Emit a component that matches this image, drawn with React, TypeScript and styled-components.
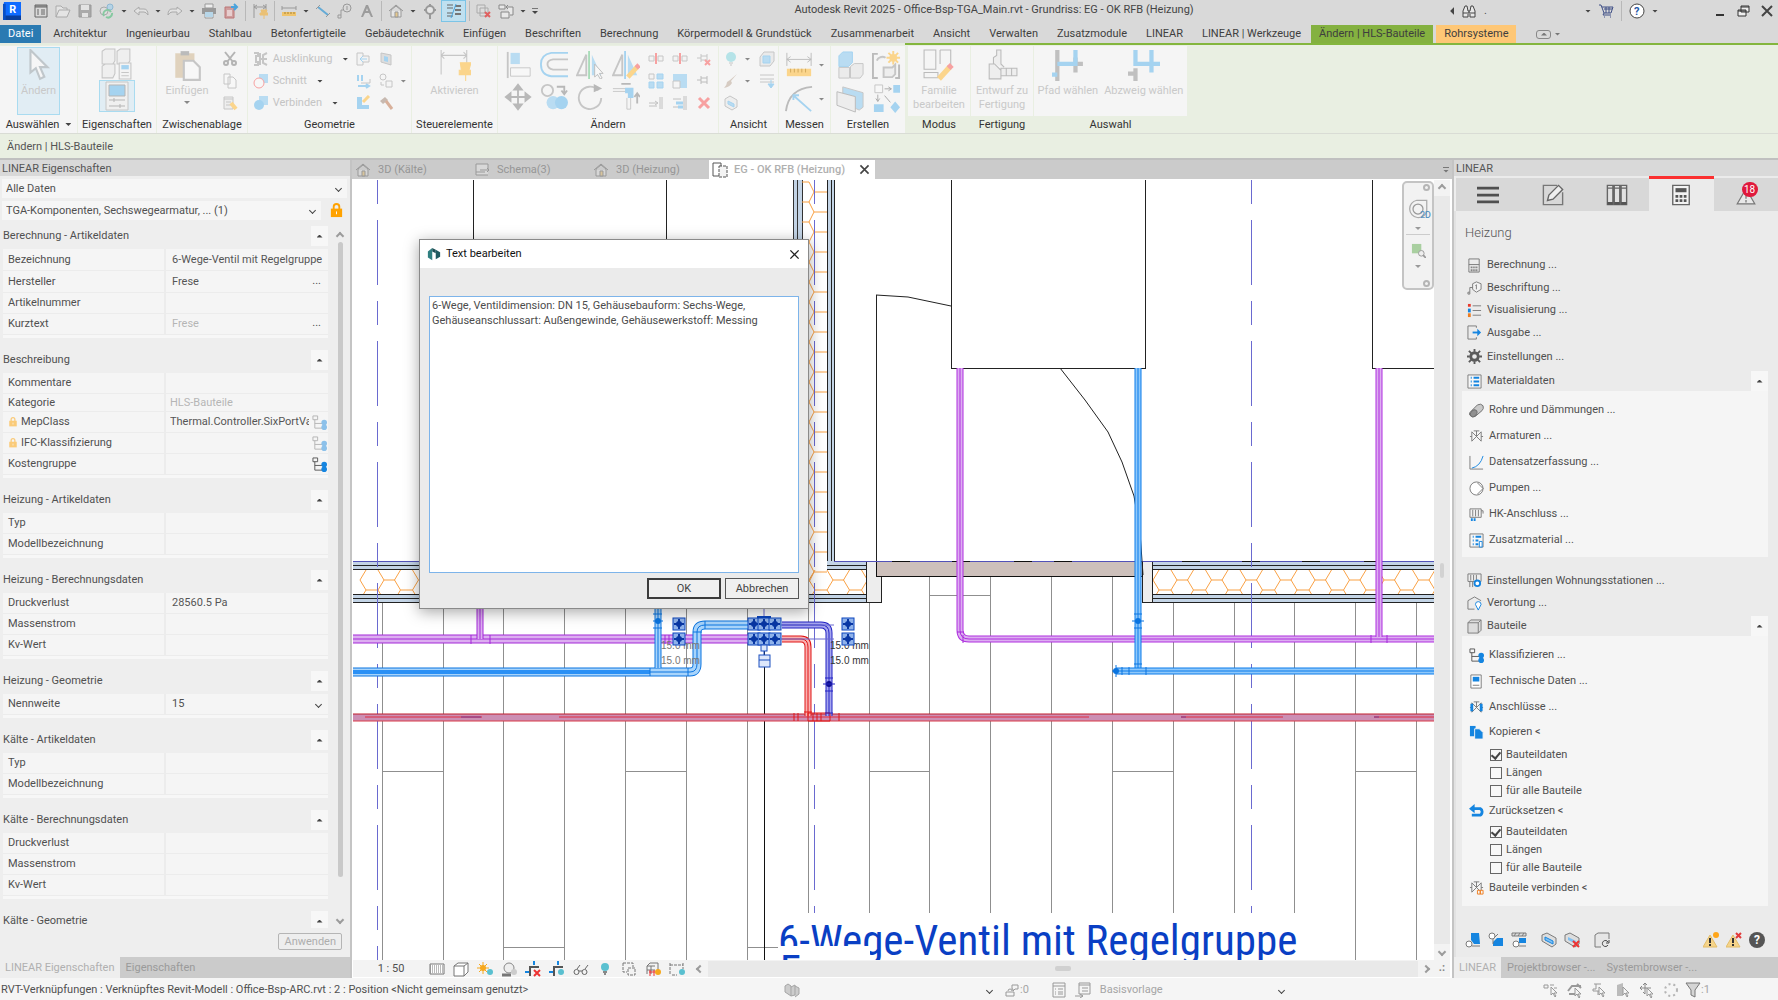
import React from "react";
import styled, { createGlobalStyle } from "styled-components";

const FONT = `Roboto, "Open Sans", "Liberation Sans", sans-serif`;

const Global = createGlobalStyle`
  * { box-sizing: border-box; }
  html, body { margin: 0; height: 100%; }
  body { font: 11px/16px ${FONT}; color: #505050; background: #f5f5f5; }
  button, input, select, textarea { font: inherit; color: inherit; }
  button { border: 0; padding: 0; background: none; }
`;

/* ---------- icons ---------- */

const K = "#7b7b7b";
const BL = "#1585e0";
const G = "#c6c6c6";
const B = "#b9dcf2";
const BB = "#a5d3f0";
const Y = "#fbd58c";
const R = "#f7a1a1";

const valve = (c: string) => (
  <path d="M1 8H3M13 8H15M3 3V13L13 3V13L3 3M8 8V2M5 2H11" fill="none" stroke={c} />
);
const cursor = (x: number, y: number, c = "#999") => (
  <path d={`M${x} ${y}v8l2-2 2 4 1-1-2-3h3z`} fill="#f5f5f5" stroke={c} />
);
const warn = (
  <>
    <path d="M7 3L14 15H0Z" fill="#f5d48a" stroke="#e3bd69" />
    <path d="M7 6V11M7 12V14" stroke="#333" strokeWidth="2" />
  </>
);
const tree = (c: string, b: string) => (
  <>
    <path d="M1 1H6V5H1ZM3 5V14H12M3 9H12" fill="none" stroke={c} />
    <circle cx="13" cy="8" r="3" fill={b} />
    <circle cx="13" cy="13" r="3" fill={b} />
  </>
);
const list = (
  <path d="M1 1H15V15H1Z" fill="#f7f7f7" stroke={K} />
);

const ICONS: Record<string, React.ReactNode> = {
  logo: (
    <>
      <path d="M1 0H20V20H1Z" fill="#0f6bff" />
      <path d="M1 15H20V20H1Z" fill="#0a3f9c" />
      <path d="M0 2H3V20H0Z" fill="#0a4fc4" />
      <text x="7" y="12" fill="#fff" fontSize="12" fontWeight="700" fontFamily="Roboto">R</text>
    </>
  ),
  props: <path d="M2 2H14V14H2ZM2 4H14M2 3H14M4 7H6M8 7H12M4 9H6M8 9H12M4 11H6M8 11H12" fill="none" stroke="#666" />,
  open: <path d="M1 14V3H6L8 5H12V7M1 14L4 7H15L12 14Z" fill="#e4e4e4" stroke="#aaa" />,
  save: <><path d="M2 2H14V14H2Z" fill="#aaa" stroke="#999" /><path d="M4 2H12V7H4ZM5 10H11V14H5Z" fill="#e3e3e3" /></>,
  sync: <><circle cx="5" cy="8" r="4" fill="#ddd" stroke="#aaa" /><circle cx="11" cy="4" r="3" fill="#b5d3e6" stroke="#8fb8d2" /><path d="M5 13A4 4 0 0 1 12 9M13 10A4 4 0 0 1 7 14" fill="none" stroke="#85c9a0" strokeWidth="2" /></>,
  undo: <path d="M1 8L6 4V6H11Q15 6 15 12Q13 9 11 9H6V12Z" fill="#e2e2e2" stroke="#aaa" />,
  redo: <path d="M15 8L10 4V6H5Q1 6 1 12Q3 9 5 9H10V12Z" fill="#e2e2e2" stroke="#aaa" />,
  print: <><path d="M4 1H12V5H4ZM4 10H12V15H4Z" fill="#eee" stroke="#999" /><path d="M1 5H15V11H1Z" fill="#999" /><path d="M4 9H12V14H4Z" fill="#b7d6e8" /></>,
  pdf: <><path d="M2 4H11V15H2Z" fill="#cf9d9d" stroke="#b77" /><path d="M4 8H9M4 10H9M4 12H9" stroke="#fff" /><path d="M8 4H14M11 1L14 4L11 7" stroke="#4aa3dc" strokeWidth="2" fill="none" /></>,
  dimpin: <><path d="M2 1V15M14 1V7M2 4H14M5 2L2 4L5 6M11 2L14 4L11 6" fill="none" stroke="#999" /><path d="M9 7H15L14 10H16V12H8V10H10ZM12 12V16" fill="#eac074" stroke="#eac074" /></>,
  ruler: <><path d="M1 3V7M15 3V7M1 5H15" stroke="#999" /><path d="M1 9H15V13H1Z" fill="#f0c46c" /><path d="M4 9V11M7 9V11M10 9V11M13 9V11" stroke="#a98334" /></>,
  dim2: <><path d="M3 4L13 12" stroke="#65abd6" strokeWidth="2" /><path d="M1 6L5 2M11 14L15 10" stroke="#999" /></>,
  tag: <><circle cx="10" cy="5" r="4" fill="none" stroke="#999" /><path d="M10 3V7M6 7H4V12M1 12H4V15H1Z" fill="none" stroke="#999" /></>,
  letter: <path d="M2 14L7 2H9L14 14H12L10 10H6L4 14ZM7 8H9L8 5Z" fill="#9c9c9c" />,
  house: <><path d="M1 8L8 2L15 8M3 7V14H13V7L8 3Z" fill="#e6e6e6" stroke="#999" /><path d="M7 9H10V14H7Z" fill="#e6c88c" stroke="#999" /></>,
  section: <><circle cx="8" cy="7" r="4" fill="#e6e6e6" stroke="#999" strokeWidth="2" /><path d="M8 1V3M8 11V16M2 7H4M12 7H14" stroke="#999" strokeWidth="2" /></>,
  thin: <><path d="M1 2H7M1 5H7M1 10H7M1 13H7" stroke="#666" /><path d="M9 3H15M9 7H15M9 11H15" stroke="#777" strokeWidth="2" /><path d="M10 1L5 15" stroke="#4aa3dc" /></>,
  closeHidden: <><path d="M1 2H9V10H1ZM4 5H12V13H4Z" fill="#ddd" stroke="#aaa" /><path d="M9 9L14 14M14 9L9 14" stroke="#e06060" strokeWidth="2" /></>,
  switchWin: <path d="M1 2H7V6H1ZM3 9H11V15H3ZM9 4H15V12H12M10 2L8 4L10 6" fill="#e8e8e8" stroke="#888" />,
  binoc: <path d="M2 8L4 3H6L7 8H9L10 3H12L14 8V14H9V9H7V14H2ZM2 10H6M10 10H14" fill="#e8e8e8" stroke="#444" />,
  cart: <path d="M1 2H3L6 10H13L15 4H4M6 10L5 12H13M6 14H7M12 14H13M6 6H14M8 4V10M11 4V10" fill="none" stroke="#3f4f86" strokeWidth="1" />,
  help: <><circle cx="8" cy="8" r="7" fill="#fff" stroke="#444" /><text x="5" y="12" fontSize="11" fontWeight="700" fill="#2458a8" fontFamily="Roboto">?</text></>,
  min: <path d="M3 12H11" stroke="#333" strokeWidth="2" />,
  restore: <path d="M5 3H13V9H5ZM5 4H13M2 7H10V13H2ZM2 8H10" fill="#eee" stroke="#333" />,
  x: <path d="M3 3L13 13M13 3L3 13" stroke="#444" strokeWidth="2" />,
  thinX: <path d="M2 2L14 14M14 2L2 14" stroke="#222" strokeWidth="2" />,
  lock: <><path d="M5 7V4Q5 1 8 1Q11 1 11 4V7" fill="none" stroke="#ffa200" strokeWidth="2" /><path d="M2 6H14V15H2Z" fill="#ffa200" /><path d="M8 9V12" stroke="#fff" /></>,
  tree: tree("#555", BL),
  treeSoft: tree("#b3b3b3", "#8cc1ea"),
  burger: <path d="M0 3H16M0 8H16M0 13H16" stroke="#4f4f4f" strokeWidth="2" />,
  edit: <><path d="M11 1H1V15H15V6" fill="none" stroke="#777" /><path d="M4 12L5 8L12 1L15 4L8 11Z" fill="#eee" stroke="#666" /></>,
  books: <><path d="M1 1H5V15H1ZM6 1H10V15H6ZM11 1H15V15H11ZM1 3H15" fill="#e2e2e2" stroke="#666" /><path d="M1 13H5V15H1ZM6 13H10V15H6ZM11 13H15V15H11Z" fill="#555" /></>,
  calc: <><path d="M2 1H14V15H2Z" fill="#f3f3f3" stroke="#666" /><path d="M4 3H12V6H4Z" fill="#555" /><path d="M4 9H12M4 12H12" stroke="#555" strokeWidth="2" strokeDasharray="2 1" /></>,
  alert: <path d="M8 3L15 15H1ZM8 7V11M8 12V14" fill="#e9e9e9" stroke="#777" />,
  calcS: <><path d="M2 1H13V15H2ZM2 7H13" fill="#ececec" stroke="#777" /><path d="M4 10H12M4 13H12" stroke="#555" strokeWidth="2" strokeDasharray="1 1" /></>,
  tagHex: <><path d="M6 4L10 2L15 4V10L10 13L6 10Z" fill="#f3f3f3" stroke={K} /><path d="M9 6L10 5V10M6 8H3V13M1 13H3V15H1Z" fill="none" stroke={K} /></>,
  legend: <><path d="M1 1H4V4H1Z" fill="#e8392c" /><path d="M1 6H4V10H1Z" fill={BL} /><path d="M1 11H4V15H1Z" fill="#ee7d20" /><path d="M6 3H15M6 8H15M6 13H15" stroke={K} /></>,
  out: <><path d="M10 3V1H1V15H10V13" fill="none" stroke={K} /><path d="M6 8H12" stroke={BL} strokeWidth="2" /><path d="M11 4L15 8L11 12Z" fill={BL} /></>,
  gear: <><circle cx="8" cy="8" r="4" fill="none" stroke="#5b5b5b" strokeWidth="3" /><path d="M8 0V3M8 13V16M0 8H3M13 8H16M2 2L5 5M11 11L14 14M14 2L11 5M5 11L2 14" stroke="#5b5b5b" strokeWidth="2" /></>,
  listBlue: <>{list}<path d="M4 4H5M4 8H5M4 12H5M7 4H13M7 8H13M7 12H13" stroke={BL} strokeWidth="2" /></>,
  pipe: <><path d="M1 10L9 2Q13 0 15 3Q16 6 14 8L7 14Q3 16 1 13Q0 12 1 10Z" fill="#c9c9c9" stroke="#6f6f6f" /><ellipse cx="5" cy="11" rx="3" ry="4" transform="rotate(40 5 11)" fill="#909090" stroke="#6f6f6f" /></>,
  valve: valve(K),
  chart: <><path d="M1 1V15H15" fill="none" stroke={K} /><path d="M3 14Q12 12 15 1" fill="none" stroke={BL} /></>,
  pump: <><circle cx="8" cy="8" r="7" fill="#fff" stroke={K} /><path d="M9 2L15 8L9 14" fill="none" stroke={K} /></>,
  radiator: <><path d="M1 2H13V11H1ZM4 3V10M7 3V10M10 3V10M13 4H15V7" fill="#f3f3f3" stroke={K} /><path d="M3 12V15M6 12V15" stroke={BL} strokeWidth="2" /></>,
  listClip: <>{list}<path d="M4 4H5M4 8H5M4 12H5M7 4H13M7 8H10M7 12H10" stroke={BL} strokeWidth="2" /><path d="M11 9H14V15H11Z" fill="#fff" stroke={BL} /></>,
  station: <><path d="M1 1H15V9H1ZM4 2V8M7 2V8M10 2V8M3 9V15M6 9V15" fill="#eee" stroke={K} /><circle cx="11" cy="11" r="3" fill="#fff" stroke={BL} strokeWidth="2" /></>,
  place: <><path d="M1 5L8 1L15 5M1 5V14H8" fill="none" stroke={K} /><path d="M12 15L9 9Q9 6 12 6Q15 6 15 9Z" fill="#fff" stroke={BL} /></>,
  block: <path d="M1 4L4 1H15V12L12 15H1ZM1 4H12V15M12 4L15 1" fill="#ddd" stroke={K} />,
  tech: <><path d="M2 1H13V15H2Z" fill="#fff" stroke={K} /><path d="M4 3H11V8H4Z" fill={BL} /><path d="M4 12H11" stroke={K} /></>,
  valveBlue: <>{valve(K)}<path d="M3 4V12M13 4V12" stroke={BL} strokeWidth="3" /></>,
  copyBlue: <><path d="M1 1H7V12H1Z" fill={BL} /><path d="M6 4H11L15 8V15H6Z" fill={BL} stroke="#f5f5f5" /></>,
  undoBlue: <><path d="M5 6H12Q14 7 14 9Q14 12 12 13H3" fill="none" stroke={BL} strokeWidth="3" /><path d="M6 1V11L0 6Z" fill={BL} /></>,
  connect: <>{valve(K)}<path d="M9 11H12V15H9ZM12 11H15V15H12Z" fill="#f5f5f5" stroke="#ee7d20" /></>,
  b1: <><path d="M6 1H14L15 12H9L6 8Z" fill={BL} /><circle cx="4" cy="12" r="3" fill="#fff" stroke={K} /><path d="M7 14H15" stroke={K} /></>,
  b2: <><path d="M5 10L9 6H15V14H5Z" fill={BL} /><circle cx="4" cy="4" r="3" fill="#fff" stroke={K} /><path d="M6 6L10 2M5 7V12" stroke={K} /></>,
  b3: <><path d="M1 1H15V4H1ZM3 4L5 1M7 4L9 1M11 4L13 1" fill="#ddd" stroke={K} /><path d="M8 6H15V11H8Z" fill={BL} /><circle cx="5" cy="12" r="3" fill="#fff" stroke={K} /><path d="M8 14H15" stroke={K} /></>,
  b4: <><path d="M1 3L6 1L15 6V12L11 15L1 9Z" fill="#ddd" stroke={K} /><path d="M4 5L12 9V12L4 8Z" fill="#7fc0f2" stroke={BL} /></>,
  b5: <><path d="M1 3L6 1L15 6V12L11 15L1 9Z" fill="#ddd" stroke={K} /><path d="M4 5L12 9V12L4 8Z" fill="#7fc0f2" /><path d="M9 9L15 15M15 9L9 15" stroke="#e33" strokeWidth="2" /></>,
  b6: <><path d="M7 15H1V3L4 1H15V7" fill="#e6e6e6" stroke={K} /><path d="M14 10A3 3 0 1 0 14 13M15 8V11H12" fill="none" stroke="#444" /></>,
  w1: <>{warn}<circle cx="13" cy="3" r="3" fill="#ffa61a" /></>,
  w2: <>{warn}<path d="M10 1L15 6M15 1L10 6" stroke="#e23a3a" strokeWidth="2" /></>,
  helpDark: <><circle cx="8" cy="8" r="8" fill="#555" /><text x="5" y="12" fontSize="12" fontWeight="700" fill="#fff" fontFamily="Roboto">?</text></>,
  homeTab: <><path d="M1 8L8 2L15 8M3 7V14H13V7L8 3Z" fill="#d6d6d6" stroke="#999" /><path d="M7 9H10V14H7Z" fill="#d8c49c" stroke="#999" /></>,
  schema: <path d="M14 7V2H2V13H14M2 10H11M6 8H15L13 6M15 8L13 10" fill="#d8d8d8" stroke="#999" />,
  plan: <><path d="M1 1H9V14H1Z" fill="#fff" stroke="#555" /><path d="M7 4H15V15H7Z" fill="#f4f4f4" stroke="#555" strokeDasharray="3 1" /></>,
  hatch: <><path d="M1 3H15V13H1Z" fill="#fff" stroke="#777" /><path d="M1 5H15M1 7H15M1 9H15M1 11H15" stroke="#777" strokeDasharray="1 1" /></>,
  cube: <path d="M1 5L5 2H15V11L11 15H1ZM1 5H11V15M11 5L15 2" fill="#fff" stroke="#777" />,
  sun: <><circle cx="6" cy="7" r="3" fill="#f6a81c" /><path d="M6 1V13M0 7H12M2 3L10 11M10 3L2 11" stroke="#f6a81c" /><circle cx="13" cy="11" r="3" fill="#5ac0d0" /></>,
  shadow: <><circle cx="8" cy="7" r="5" fill="#eee" stroke="#888" /><path d="M1 14H10" stroke="#777" strokeWidth="3" /><circle cx="13" cy="11" r="3" fill="#ccc" /></>,
  crop: <><path d="M5 15V6H14" stroke="#555" fill="none" strokeWidth="2" /><path d="M0 11H4M9 0V4" stroke={BL} strokeWidth="2" /><path d="M9 9L15 15M15 9L9 15" stroke="#e33" strokeWidth="2" /></>,
  crop2: <><path d="M5 15V6H14" stroke="#555" fill="none" strokeWidth="2" /><path d="M0 11H4M9 0V4" stroke={BL} strokeWidth="2" /><circle cx="12" cy="11" r="3" fill="#5ac0d0" /></>,
  glasses: <path d="M1 11A2 2 0 1 0 6 11A2 2 0 1 0 1 11M9 11A2 2 0 1 0 14 11A2 2 0 1 0 9 11M6 10H9M4 8L7 4M12 8L15 4" fill="none" stroke="#666" />,
  bulb: <><circle cx="8" cy="6" r="4" fill="#5ac0d0" /><path d="M6 11H10M7 13H9" stroke="#888" strokeWidth="2" /></>,
  boxes: <path d="M2 2H12V6M2 2V11H6M7 7H14V14H7Z" fill="none" stroke="#777" strokeDasharray="3 1" />,
  grid: <><path d="M2 5L5 2H13V9M2 5H10M2 5V13M6 5V13M2 9H10" fill="none" stroke="#777" /><path d="M5 9V15M9 9V15M4 11H10" stroke="#e33" /><circle cx="13" cy="11" r="3" fill="#f6a81c" /></>,
  dimBulb: <><path d="M1 2V14M14 2V8M1 4H14M3 14H8" stroke="#777" strokeDasharray="3 1" /><circle cx="13" cy="11" r="3" fill="#5ac0d0" /></>,
  sw: <path d="M1 4L4 2L7 4V14L4 12L1 10ZM7 5L11 3V13L7 14M11 4L15 6V12L11 15" fill="#ccc" stroke="#a5a5a5" />,
  user: <path d="M2 14V10H10V14ZM4 9A2 2 0 1 1 8 9M8 3H14V7H11L9 9V7H8Z" fill="none" stroke="#999" />,
  docList: <path d="M2 1H14V15H2ZM2 4H14M4 7H5M7 7H12M4 10H5M7 10H12M4 12H5M7 12H12" fill="#f5f5f5" stroke="#999" />,
  docOut: <path d="M4 1H15V12H4ZM4 3H15M7 6H13M7 9H13M0 14H8M5 12L8 14L5 16" fill="none" stroke="#999" />,
  s1: <><path d="M1 3H5V6H1ZM7 3H11M11 6H14" fill="none" stroke="#999" />{cursor(8, 5)}</>,
  s2: <><path d="M1 9L5 4H14M2 12H8M10 2L14 6" fill="none" stroke="#999" strokeWidth="2" />{cursor(8, 6)}</>,
  s3: <><path d="M3 2H10M5 2V7H2V9H10M7 9V13" fill="none" stroke="#999" />{cursor(8, 5)}</>,
  s4: <><path d="M2 3L8 1V14H2Z" fill="#bbb" />{cursor(8, 5)}</>,
  s5: <><path d="M6 1V12M1 6H12M4 3L6 1L8 3M3 4L1 6L3 8M4 10L6 12" fill="none" stroke="#888" />{cursor(8, 6)}</>,
  s6: <circle cx="8" cy="8" r="6" fill="none" stroke="#b5b5b5" strokeWidth="2" strokeDasharray="2 3" />,
  filter: <path d="M1 1H15L10 8V15L6 13V8Z" fill="#d5d5d5" stroke="#777" />,
  dlg: <><path d="M1 5L6 1V15L1 12Z" fill="#2f7f80" /><path d="M6 1L10 3V7L6 5Z" fill="#1d4f55" /><path d="M10 3L15 6V11L10 14Z" fill="#1f5a60" /></>,
  wheel: <><path d="M7 1H15V10A7 7 0 1 1 7 1Z" fill="#f2f2f2" stroke="#aaa" /><circle cx="8" cy="8" r="4" fill="none" stroke="#999" /></>,
  zoomR: <><path d="M1 1H11V11H1Z" fill="#a9cfa0" /><circle cx="11" cy="11" r="3" fill="#eee" stroke="#999" /><path d="M13 13L16 16" stroke="#999" strokeWidth="2" /></>,
  /* ribbon, small */
  cut: <><path d="M3 1L11 11M13 1L5 11" stroke="#b4b4b4" strokeWidth="2" /><circle cx="4" cy="12" r="2" fill="none" stroke="#b4b4b4" strokeWidth="2" /><circle cx="12" cy="12" r="2" fill="none" stroke="#b4b4b4" strokeWidth="2" /></>,
  copy: <path d="M2 1H8V11H2ZM6 4H11L14 7V15H6Z" fill="#f7f7f7" stroke={G} />,
  match: <><path d="M2 2H11V14H2ZM2 4H11M4 7H9M4 10H9" fill="#eee" stroke={G} /><path d="M9 8L14 14" stroke={Y} strokeWidth="4" /></>,
  cope: <path d="M1 2H5V5H3V11H5V14H1M7 2V14M14 2L10 4V12L14 14M7 8H14" fill="none" stroke={G} strokeWidth="2" />,
  cutG: <><path d="M6 1H15V10H6Z" fill={B} /><circle cx="6" cy="10" r="5" fill="#f7f7f7" stroke={R} /></>,
  join: <><path d="M6 1H15V10H6Z" fill={B} /><circle cx="6" cy="10" r="5" fill={BB} /></>,
  g1: <><path d="M2 2H8V5H14V11H8V14H2Z" fill="#f3f3f3" stroke={G} /><path d="M12 8H6M8 5L5 8L8 11" stroke={BB} fill="none" /></>,
  g2: <><path d="M3 2V8M7 2V8M3 13H13M11 11L14 13L11 15" stroke={BB} strokeWidth="2" fill="none" /><path d="M6 10H15V6" stroke={G} fill="none" /></>,
  g3: <><path d="M2 2V14H14V10H7V2Z" fill={BB} /><path d="M8 7L14 1" stroke={Y} strokeWidth="3" /></>,
  g4: <><path d="M3 2L13 4V14L3 11Z" fill="#ddd" stroke={G} /><path d="M6 5L10 6V11L6 10Z" fill={BB} /></>,
  g5: <><circle cx="5" cy="4" r="3" fill="none" stroke={G} /><path d="M8 8H14V14H8ZM3 9V12H6" fill="none" stroke={G} /></>,
  g6: <><path d="M2 6L7 2L10 5L5 9Z" fill="#c7b9b0" /><path d="M8 6L14 14" stroke="#d8b09a" strokeWidth="3" /></>,
  split: <><path d="M1 5H6V10H1ZM10 5H15V10H10Z" fill="#f3f3f3" stroke={G} /><path d="M8 2V13" stroke={R} strokeWidth="2" /></>,
  unpin: <><path d="M1 7H5M5 3V11M5 5H11M5 9H11M11 3V11" stroke={G} fill="none" /><path d="M9 9L14 14M14 9L9 14" stroke={R} strokeWidth="2" /></>,
  pinS: <path d="M1 7H5M5 3V11M5 5H11M5 9H11M11 3V11" stroke="#bcbcbc" fill="none" />,
  array: <><path d="M1 1H6V6H1Z" fill="#f3f3f3" stroke={G} /><path d="M9 1H15V6H9ZM1 9H6V15H1ZM9 9H15V15H9Z" fill={B} stroke={BB} /></>,
  scale: <><path d="M1 1H15V15H1Z" fill={B} /><path d="M1 8H8V15H1Z" fill="#f5f5f5" stroke={G} /></>,
  trim1: <path d="M1 8H9M7 6L10 8L7 10M12 2V14M14 2V14M1 11H9" stroke="#c0c0c0" fill="none" />,
  trim2: <><path d="M1 4H9M1 12H9M12 1V15M14 1V15" stroke="#c0c0c0" /><path d="M4 8H11M6 12H11" stroke={BB} strokeWidth="3" /></>,
  del: <path d="M3 3L13 13M13 3L3 13" stroke={R} strokeWidth="3" />,
  bulbSoft: <><circle cx="8" cy="6" r="5" fill="#b5e3e8" /><path d="M6 12H10M7 14H9" stroke={G} /></>,
  boxBlue: <><path d="M1 6L5 1H15V10L11 15H1Z" fill="#eaeaea" stroke={G} /><path d="M4 5H11V12H4Z" fill={B} stroke={BB} /></>,
  brush: <path d="M14 1L8 8L9 10Q7 14 1 15Q4 12 4 9L7 7Z" fill="#d6cbc2" />,
  lines: <><path d="M1 2H15M1 6H15M1 9H15" stroke={G} /><path d="M12 7V13M9 11L12 15L15 11Z" fill={BB} stroke={BB} /></>,
  cubeSoft: <><path d="M2 4L7 1L14 5V12L9 15L2 11Z" fill="#eee" stroke={G} /><path d="M5 6L11 9V12L5 9Z" fill={B} stroke={BB} /></>,
  /* ribbon, large on a 30 unit grid */
  arrowL: <path d="M7 1L7 22L12 18L16 28L20 26L16 17L23 17Z" fill="#f6f6f6" stroke="#c0c7cb" strokeWidth="2" />,
  family: <><path d="M2 3L5 1H14V12L12 15H2ZM16 3L19 1H28V12L26 15H16ZM2 17L5 15H14V24L12 28H2Z" fill="#efefef" stroke={G} /><path d="M18 14H29V29H18Z" fill="#f3f3f3" stroke={G} /><path d="M20 16H27V20H20Z" fill={BB} /><path d="M20 23H27M20 26H27" stroke={G} /></>,
  propsL: <><path d="M4 1H26V29H4Z" fill="#f0f0f0" stroke={G} /><path d="M7 4H23V15H7Z" fill={BB} stroke="#b5b5b5" /><path d="M7 19H23M7 25H23M12 17V21M18 23V27" stroke="#b5b5b5" /></>,
  paste: <><path d="M4 4H22V27H4Z" fill="#e0d2bd" /><path d="M9 2H17V6H9Z" fill="#bbb" /><path d="M12 11H21L27 17V29H12Z" fill="#f7f7f7" stroke={G} strokeWidth="2" /></>,
  activate: <><path d="M2 1V24M26 1V14M2 6H26M5 3L2 6L5 9M23 3L26 6L23 9" stroke={G} fill="none" strokeWidth="1" /><path d="M20 13H30L28 20H30V24H19V20H21ZM25 24V30" fill={Y} stroke={Y} /></>,
  align: <><path d="M4 1V29" stroke={G} strokeWidth="2" /><path d="M7 2H17V14H7Z" fill={B} /><path d="M7 18H28V27H7Z" fill="#f7f7f7" stroke={G} strokeWidth="1" /></>,
  offset: <><path d="M30 2H12Q1 4 1 14Q1 26 12 27H30" fill="none" stroke={BB} strokeWidth="2" /><path d="M30 9H14Q8 10 8 14Q8 19 14 20H30" fill="none" stroke={G} strokeWidth="2" /></>,
  mirror: <><path d="M1 26L11 4V26Z" fill="#f5f5f5" stroke={G} strokeWidth="2" /><path d="M14 0V30" stroke="#a8dcb8" strokeWidth="2" /><path d="M17 4L27 26H17Z" fill={B} /><path d="M20 14V28L23 25L26 30L28 29L25 24H29Z" fill="#f8f8f8" stroke="#bbb" /></>,
  mirror2: <><path d="M1 26L11 4V26Z" fill="#f5f5f5" stroke={G} strokeWidth="2" /><path d="M14 0V30" stroke={BB} strokeWidth="2" /><path d="M17 4L27 26H17Z" fill={B} /><path d="M17 28L27 17" stroke={Y} strokeWidth="5" /><path d="M26 18L29 15" stroke={R} strokeWidth="5" /></>,
  move: <path d="M15 2V28M2 15H28M11 7L15 2L19 7ZM11 23L15 28L19 23ZM7 11L2 15L7 19ZM23 11L28 15L23 19Z" fill="#b8b8b8" stroke="#b8b8b8" strokeWidth="2" />,
  copyL: <><circle cx="8" cy="8" r="6" fill="none" stroke={G} strokeWidth="2" /><path d="M18 4H26V11M23 8L26 12L29 8" fill="none" stroke="#b8b8b8" strokeWidth="2" /><circle cx="14" cy="21" r="7" fill={B} /><circle cx="23" cy="21" r="7" fill={BB} /></>,
  rotate: <><path d="M24 8A12 12 0 1 0 27 16" fill="none" stroke={G} strokeWidth="2" /><path d="M19 1L28 6L19 10Z" fill="#b8b8b8" /></>,
  corner: <><path d="M1 6H16V9H1M20 16V28H16V16" fill="none" stroke={G} /><path d="M14 5H23V16H17V11H14Z" fill={BB} /><path d="M10 1H20M27 12V22M24 15L27 11L30 15" stroke="#b8b8b8" fill="none" strokeWidth="2" /></>,
  measure: <><path d="M2 2V16M28 2V16M2 9H28M6 6L2 9L6 12M24 6L28 9L24 12" stroke="#bbb" fill="none" /><path d="M2 19H28V27H2Z" fill={Y} /><path d="M6 19V23M10 19V23M14 19V23M18 19V23M22 19V23" stroke="#cfa75a" /></>,
  arc: <><path d="M1 28Q4 4 29 2" fill="none" stroke="#bbb" strokeWidth="2" /><path d="M10 12L28 28M9 16V11H15" fill="none" stroke={BB} strokeWidth="2" /></>,
  cubes: <><path d="M3 5L7 1H17V12L13 16H3Z" fill={B} stroke={BB} /><path d="M3 17H14V28H3ZM15 16L19 13H28V24L25 28H15Z" fill="#ebebeb" stroke={G} /></>,
  star: <><path d="M6 3H1V28H6M24 28H28V14" fill="none" stroke="#bbb" strokeWidth="2" /><path d="M5 10A6 6 0 0 1 14 7M12 17H21L24 14V24L21 27H12Z" fill="#eee" stroke={G} strokeWidth="2" /><path d="M22 0V14M15 7H29M17 2L27 12M27 2L17 12" stroke={Y} strokeWidth="2" /><circle cx="22" cy="7" r="4" fill={Y} /></>,
  panelG: <><path d="M7 3L28 9V24L24 27L7 19Z" fill={B} stroke={G} /><path d="M1 8L20 13V29L1 22Z" fill="#ededed" stroke="#bbb" /></>,
  diagram: <><path d="M3 1H11V9H3Z" fill="#f7f7f7" stroke={G} /><path d="M22 1H29V9H22ZM2 21H12V29H2ZM24 18L29 24L24 30L19 24Z" fill={BB} /><path d="M13 5H20M17 3L20 5L17 7M6 11V18M4 15L6 18L8 15M13 12L19 19" stroke="#aaa" fill="none" /></>,
  modus: <><path d="M1 1H12V19H1ZM16 1H26V19M1 22V27H14V22ZM16 1V14" fill="none" stroke="#bbb" strokeWidth="1" /><path d="M15 28L25 17" stroke={Y} strokeWidth="5" /><path d="M24 18L27 15" stroke={R} strokeWidth="5" /></>,
  fab: <path d="M7 14V8L10 6V1H14V14L17 17M3 14H8L14 20V28H3ZM14 18H29V25H14ZM19 18V25M24 18V25" fill="#eee" stroke="#bbb" strokeWidth="1" />,
  path: <><path d="M5 1V30M22 8V22M22 14H29" stroke="#c0c0c0" strokeWidth="4" /><path d="M5 14H24M22 1V14M0 24H5" stroke={BB} strokeWidth="4" /></>,
  branch: <><path d="M7 18V30M0 23H7" stroke="#c0c0c0" strokeWidth="4" /><path d="M7 1V16M7 14H30M22 1V22" stroke={BB} strokeWidth="4" /></>,
};

const Svg = styled.svg<{ $s: number }>`
  width: ${(p) => p.$s}px;
  height: ${(p) => p.$s}px;
  flex: none;
  display: block;
`;
const Icon = ({ n, s = 16, g = 16 }: { n: string; s?: number; g?: number }) => (
  <Svg $s={s} viewBox={`0 0 ${g} ${g}`} aria-hidden>{ICONS[n]}</Svg>
);
const Big = ({ n, s = 30 }: { n: string; s?: number }) => <Icon n={n} s={s} g={30} />;

const SHAPES = {
  down: "polygon(0 0, 100% 0, 50% 100%)",
  up: "polygon(0 100%, 50% 0, 100% 100%)",
  left: "polygon(100% 0, 100% 100%, 0 50%)",
};
const Tri = styled.i<{ $d?: "up" | "left"; $c?: string }>`
  flex: none;
  width: ${(p) => (p.$d === "left" ? 4 : 6)}px;
  height: ${(p) => (p.$d === "left" ? 8 : 3)}px;
  background: ${(p) => p.$c || "#444"};
  clip-path: ${(p) => SHAPES[p.$d || "down"]};
`;
const Chev = styled.i<{ $dir?: number; $dark?: boolean }>`
  flex: none;
  width: ${(p) => (p.$dark ? 5 : 6)}px;
  height: ${(p) => (p.$dark ? 5 : 6)}px;
  border: solid ${(p) => (p.$dark ? "#444" : "#9c9c9c")};
  border-width: ${(p) => (p.$dark ? "0 1px 1px 0" : "0 2px 2px 0")};
  transform: rotate(${(p) => p.$dir ?? 45}deg);
`;

/* ---------- frame ---------- */

const Shell = styled.div`
  display: flex;
  flex-direction: column;
  height: 100vh;
  overflow: hidden;
  white-space: nowrap;
`;
const TitleBar = styled.header`
  display: grid;
  grid-template-columns: auto 1fr auto;
  align-items: center;
  height: 25px;
  flex: none;
  padding-bottom: 3px;
  background: #d9d9d9;
`;
const Qat = styled.div`
  display: flex;
  align-items: center;
  gap: 6px;
  padding-left: 3px;
`;
const Tool = styled.button<{ $on?: boolean }>`
  display: flex;
  align-items: center;
  justify-content: center;
  height: 20px;
  width: ${(p) => (p.$on ? 23 : 16)}px;
  margin: ${(p) => (p.$on ? "0 -2px" : "0")};
  background: ${(p) => (p.$on ? "#bfe0f0" : "none")};
  outline: ${(p) => (p.$on ? "1px solid #7cc4e6" : "none")};
`;
const Sep = styled.i`
  width: 1px;
  height: 20px;
  background: #b8b8b8;
`;
const WinTitle = styled.span`
  color: #444;
  padding-bottom: 2px;
  text-align: center;
`;
const WinTools = styled.div`
  display: flex;
  align-items: center;
  justify-content: flex-end;
  gap: 7px;
  padding-right: 3px;
`;
const Space = styled.i<{ $w: number }>`
  width: ${(p) => p.$w}px;
`;
const TabRow = styled.nav`
  display: flex;
  gap: 1px;
  height: 18px;
  flex: none;
  background: #d9d9d9;
`;
const Tab = styled.button<{ $kind?: "file" | "green" | "orange" }>`
  height: 18px;
  line-height: 18px;
  padding: 0 ${(p) => (p.$kind ? 8 : 9)}px;
  margin-right: ${(p) => (p.$kind ? 2 : 0)}px;
  color: ${(p) => (p.$kind === "file" ? "#fff" : "#3e3e3e")};
  background: ${(p) => ({ file: "#2a7ab2", green: "#84b140", orange: "#fec776" }[p.$kind as string] || "none")};
`;
const TabToggle = styled.button`
  display: flex;
  align-items: center;
  gap: 3px;
  margin-left: 17px;
  span {
    display: flex;
    align-items: center;
    justify-content: center;
    width: 15px;
    height: 9px;
    border: 1px solid #888;
    border-radius: 3px;
  }
`;
const Ribbon = styled.div`
  display: flex;
  flex: none;
  height: 91px;
  background: #e9efe2;
  border-bottom: 1px solid #d9dcd5;
`;
const Group = styled.div<{ $ctx?: boolean }>`
  display: flex;
  gap: 1px;
  padding: 1px 0 0;
  flex: ${(p) => (p.$ctx ? 1 : "none")};
  padding-left: ${(p) => (p.$ctx ? 3 : 0)}px;
  border-top: 2px solid ${(p) => (p.$ctx ? "#84b63e" : "#e6ecdf")};
`;
const Panel = styled.section<{ $w: number }>`
  display: flex;
  flex-direction: column;
  width: ${(p) => p.$w}px;
  flex: none;
  background: #f5f5f5;
`;
const PanelBody = styled.div<{ $gap?: number }>`
  flex: 1;
  display: flex;
  align-items: flex-start;
  justify-content: center;
  gap: ${(p) => p.$gap ?? 8}px;
  padding-top: 2px;
`;
const PanelTitle = styled.h3<{ $ctx?: boolean }>`
  display: flex;
  align-items: center;
  justify-content: center;
  gap: 6px;
  margin: 0;
  height: 17px;
  font: inherit;
  color: #333;
  background: ${(p) => (p.$ctx ? "#e9efe2" : "none")};
`;
const BigBtn = styled.button<{ $on?: boolean; $w?: number }>`
  display: flex;
  flex-direction: column;
  align-items: center;
  min-width: ${(p) => p.$w ?? 0}px;
  min-height: 66px;
  padding-top: 1px;
  gap: 3px;
  line-height: 14px;
  color: #c9c9c9;
  white-space: pre-line;
  background: ${(p) => (p.$on ? "#e1edf4" : "none")};
  outline: ${(p) => (p.$on ? "1px solid #a9dbf0" : "none")};
`;
const IconBtn = styled.button<{ $on?: boolean }>`
  display: flex;
  padding: ${(p) => (p.$on ? "0 2px" : "0")};
  background: ${(p) => (p.$on ? "#e1edf4" : "none")};
  outline: ${(p) => (p.$on ? "1px solid #a9dbf0" : "none")};
`;
const Col = styled.div<{ $gap?: number }>`
  display: flex;
  flex-direction: column;
  gap: ${(p) => p.$gap ?? 6}px;
  padding-top: ${(p) => (p.$gap === 1 ? 0 : 3)}px;
`;
const RowBtn = styled.button`
  display: flex;
  align-items: center;
  gap: 4px;
  height: 16px;
  color: #c4c4c4;
  i { margin-left: 6px; }
`;
const SplitBtn = styled.div`
  display: flex;
  align-items: center;
  gap: 6px;
`;
const OptionBar = styled.div`
  flex: none;
  height: 24px;
  padding: 0 7px;
  line-height: 26px;
  background: #e9efe2;
  color: #555;
`;

/* ---------- workspace ---------- */

const Work = styled.main`
  flex: 1;
  min-height: 0;
  display: grid;
  grid-template-columns: 352px minmax(0, 1fr) 326px;
  border-top: 2px solid #c0c0c0;
`;
const Side = styled.aside<{ $right?: boolean }>`
  display: flex;
  flex-direction: column;
  min-height: 0;
  background: #eeeeee;
  border: solid #c4c4c4;
  border-width: ${(p) => (p.$right ? "0 0 0 2px" : "0 2px 0 0")};
`;
const SideHead = styled.h2`
  margin: 0;
  height: 16px;
  padding-left: 2px;
  font: inherit;
  line-height: 17px;
  background: #d9d9d9;
  color: #555;
`;
const Pick = styled.label`
  display: flex;
  align-items: center;
  flex: 1;
  height: 19px;
  padding-right: 6px;
  background: #f6f6f6;
`;
const Select = styled.select<{ $flush?: boolean }>`
  appearance: none;
  flex: 1;
  min-width: 0;
  border: 0;
  height: 19px;
  padding: 0 ${(p) => (p.$flush ? 0 : 4)}px;
  background: transparent;
`;
const PickRow = styled.div`
  display: flex;
  align-items: center;
  gap: 8px;
  margin: 3px 3px 0 2px;
`;
const LockBtn = styled.button`
  margin-right: 3px;
`;
const PropScroll = styled.div`
  flex: 1;
  min-height: 0;
  display: flex;
  margin-top: 6px;
`;
const PropList = styled.div`
  width: 328px;
  overflow: hidden;
`;
const Track = styled.div`
  flex: 1;
  display: flex;
  flex-direction: column;
  align-items: center;
  padding: 7px 0 5px 2px;
`;
const Thumb = styled.i`
  width: 5px;
  margin: 3px 0 0;
  flex: 636;
  border-radius: 3px;
  background: #c9c9c9;
`;
const Fill = styled.i<{ $grow?: number }>`
  flex: ${(p) => p.$grow ?? 1};
`;
const SecHead = styled.h3`
  display: flex;
  align-items: center;
  justify-content: space-between;
  margin: 0;
  height: 20px;
  padding-left: 3px;
  font: inherit;
`;
const Fold = styled.button`
  display: flex;
  flex: none;
  align-items: center;
  justify-content: center;
  width: 17px;
  height: 20px;
  background: #f7f7f7;
`;
const Props = styled.table`
  width: 325px;
  margin: 3px 0 12px 3px;
  table-layout: fixed;
  border-spacing: 0;
  background: #f5f5f5;
  border-bottom: 3px solid #f7f7f7;
`;
const Tr = styled.tr<{ $h: number }>`
  height: ${(p) => p.$h}px;
`;
const Th = styled.th`
  padding: 0 0 0 5px;
  text-align: left;
  font-weight: 400;
  border-right: 2px solid #ececec;
  border-bottom: 1px solid #ececec;
`;
const Td = styled.td<{ $tight?: boolean }>`
  padding: 0 0 0 ${(p) => (p.$tight ? 4 : 6)}px;
  border-bottom: 1px solid #ececec;
`;
const Cell = styled.div`
  display: flex;
  align-items: center;
  gap: 3px;
  height: 16px;
  padding-right: 1px;
`;
const Value = styled.input<{ $dim?: boolean }>`
  border: 0;
  padding: 0;
  flex: 1;
  min-width: 0;
  height: 16px;
  background: transparent;
  color: ${(p) => (p.$dim ? "#b5b5b5" : "#555")};
`;
const Dots = styled.button`
  padding: 0 6px 4px 0;
  height: 16px;
  line-height: 14px;
`;
const Apply = styled.button`
  align-self: flex-end;
  height: 17px;
  margin: 5px 8px 7px;
  padding: 0 5px;
  line-height: 15px;
  border: 1px solid #b5b5b5;
  border-radius: 2px;
  color: #adadad;
`;
const BottomTabs = styled.div`
  display: flex;
  flex: none;
  height: 21px;
  background: #cbcbcb;
`;
const BottomTab = styled.button<{ $on?: boolean }>`
  padding: 0 5px;
  margin-right: 1px;
  color: ${(p) => (p.$on ? "#b0b0b0" : "#9a9a9a")};
  background: ${(p) => (p.$on ? "#eee" : "none")};
`;

/* ---------- document ---------- */

const Doc = styled.div`
  position: relative;
  display: grid;
  grid-template-rows: 20px minmax(0, 1fr) 17px;
  grid-template-columns: minmax(0, 1fr) 16px;
  padding: 0 2px 1px 1px;
  background: #fff;
`;
const DocTabs = styled.div`
  grid-column: 1 / -1;
  display: flex;
  align-items: center;
  height: 19px;
  background: #cbcbcb;
  margin: 0 -2px 0 -1px;
  padding: 0 3px 0 0;
`;
const DocTab = styled.button<{ $on?: boolean }>`
  display: flex;
  align-items: center;
  gap: ${(p) => (p.$on ? 6 : 7)}px;
  width: ${(p) => (p.$on ? 166 : 119)}px;
  height: 19px;
  padding: ${(p) => (p.$on ? "0 4px 0 3px" : "1px 3px 0")};
  color: ${(p) => (p.$on ? "#b0b0b0" : "#969696")};
  font-weight: ${(p) => (p.$on ? 500 : 400)};
  background: ${(p) => (p.$on ? "#fff" : "none")};
  svg + svg { margin-left: auto; }
`;
const CloseTab = styled.span`
  margin-left: auto;
`;
const More = styled.button`
  margin-left: auto;
  border-top: 1px solid #777;
  padding-top: 2px;
  i { display: block; }
`;
const Sheet = styled.svg`
  width: 100%;
  height: 100%;
  display: block;
  background: #fff;
`;
const VBar = styled.div`
  display: flex;
  flex-direction: column;
  align-items: center;
  justify-content: space-between;
  background: #e9e9e9;
  > i { width: 4px; height: 15px; border-radius: 2px; background: #d2d2d2; }
`;
const Nub = styled.button`
  display: flex;
  align-items: center;
  justify-content: center;
  width: 16px;
  height: 16px;
  background: #f3f3f3;
`;
const ViewBar = styled.div`
  display: flex;
  align-items: center;
  height: 17px;
  background: #f3f3f3;
`;
const Scale = styled.button`
  width: 76px;
`;
const ViewTools = styled.div`
  display: flex;
  gap: 8px;
  margin-right: 7px;
`;
const HTrack = styled.div`
  display: flex;
  align-items: center;
  justify-content: center;
  flex: 1;
  height: 16px;
  background: #e9e9e9;
  i { width: 16px; height: 5px; border-radius: 2px; background: #d0d0d0; }
`;
const Grip = styled.div`
  background: #f3f3f3;
  color: #888;
  font-weight: 700;
  text-align: center;
`;
const Nav = styled.div`
  position: absolute;
  right: 18px;
  top: 21px;
  display: flex;
  flex-direction: column;
  align-items: center;
  width: 32px;
  height: 109px;
  padding: 1px 2px;
  border: 2px solid #c4c4c4;
  border-radius: 5px;
  background: #f2f2f2;
`;
const NavBtn = styled.button`
  display: flex;
  flex-direction: column;
  align-items: center;
  gap: 7px;
  margin-top: 8px;
  small {
    align-self: flex-end;
    margin: -15px -3px 0 0;
    font-size: 9px;
    font-weight: 500;
    line-height: 9px;
    color: #5b93c2;
  }
`;
const NavRule = styled.hr`
  width: 24px;
  height: 1px;
  border: 0;
  margin: 4px 0 0;
  background: #ccc;
`;
const Dot = styled.i`
  align-self: flex-end;
  flex: none;
  width: 7px;
  height: 7px;
  border: 2px solid #b5b5b5;
  border-radius: 50%;
`;

const Dialog = styled.form`
  position: absolute;
  left: 67px;
  top: 79px;
  width: 390px;
  height: 370px;
  display: flex;
  flex-direction: column;
  background: #ebebeb;
  border: 1px solid #8a8a8a;
  box-shadow: 0 3px 14px rgba(0, 0, 0, 0.35);
`;
const DlgHead = styled.div`
  display: flex;
  align-items: center;
  gap: 5px;
  height: 28px;
  padding: 0 6px 0 7px;
  background: #fff;
  color: #111;
  button { margin-left: auto; padding: 2px; }
`;
const Note = styled.textarea`
  flex: 1;
  margin: 28px 9px 5px;
  padding: 1px 2px;
  border: 1px solid #7db4ea;
  outline: 0;
  resize: none;
  line-height: 15px;
  color: #4c4c4c;
  background: #fff;
`;
const DlgButtons = styled.div`
  display: flex;
  justify-content: flex-end;
  gap: 4px;
  padding: 0 9px 9px;
`;
const DlgBtn = styled.button<{ $main?: boolean }>`
  width: 74px;
  height: 21px;
  color: #444;
  background: #f0f0f0;
  border: ${(p) => (p.$main ? "2px solid #3c3c3c" : "1px solid #555")};
`;

/* ---------- right panel ---------- */

const ModeTabs = styled.div`
  display: grid;
  grid-template-columns: repeat(5, 1fr);
  height: 35px;
  margin: 0 0 0 2px;
`;
const Mode = styled.button<{ $on?: boolean }>`
  display: flex;
  align-items: center;
  justify-content: center;
  position: relative;
  background: ${(p) => (p.$on ? "#ebebeb" : "#d8d8d8")};
  border-top: ${(p) => (p.$on ? "3px solid #fb3030" : "2px solid #ebebeb")};
`;
const Badge = styled.b`
  position: absolute;
  left: 28px;
  top: 4px;
  width: 16px;
  height: 15px;
  border-radius: 8px;
  background: #e0193c;
  color: #fff;
  font-size: 10px;
  font-weight: 400;
  line-height: 15px;
`;
const Menu = styled.div`
  flex: 1;
  min-height: 0;
  padding: 12px 10px 0 6px;
  background: #ebebeb;
  border-left: 2px solid #e2e2e2;
  display: flex;
  flex-direction: column;
`;
const MenuTitle = styled.h3`
  margin: 0 0 11px 3px;
  font: 300 13px/20px ${FONT};
  color: #555;
`;
const Item = styled.button<{ $h: number; $in?: boolean }>`
  display: flex;
  align-items: center;
  gap: 5px;
  width: 100%;
  min-width: 0;
  height: ${(p) => p.$h}px;
  padding-left: ${(p) => (p.$in ? 7 : 5)}px;
  color: #505050;
`;
const ItemRow = styled.div`
  display: flex;
  flex: none;
  align-items: flex-end;
  height: 22px;
`;
const Box = styled.div<{ $pad: number }>`
  flex: none;
  padding: 6px 0 ${(p) => p.$pad}px;
  margin-bottom: 12px;
  background: #f5f5f5;
`;
const Checks = styled.div`
  padding: 2px 0 0 28px;
`;
const Check = styled.label`
  display: flex;
  align-items: center;
  gap: 4px;
  height: 18px;
`;
const Tick = styled.input`
  appearance: none;
  display: grid;
  place-items: center;
  width: 12px;
  height: 12px;
  margin: 0;
  border: 1px solid #666;
  background: #f8f8f8;
  &:checked::after {
    content: "";
    width: 4px;
    height: 7px;
    margin-top: -2px;
    border: solid #444;
    border-width: 0 2px 2px 0;
    transform: rotate(40deg);
  }
`;
const Foot = styled.div`
  display: flex;
  align-items: center;
  gap: 7px;
  height: 34px;
  margin-top: auto;
  padding: 0 3px;
`;

/* ---------- status ---------- */

const Status = styled.footer`
  flex: none;
  display: grid;
  grid-template-columns: 784px minmax(0, 1fr) 243px;
  align-items: center;
  height: 22px;
  padding-top: 2px;
  background: #f5f5f5;
  > span { padding-left: 1px; }
`;
const StatusPart = styled.div`
  display: flex;
  align-items: center;
  color: #a5a5a5;
`;

/* ---------- drawing ---------- */

const FLOOR = [382, 443, 503, 564, 625, 686, 747, 808, 869, 929, 990, 1051, 1112, 1173, 1234, 1294, 1355, 1416];
const floorTop = (x: number) => (x > 900 && x < 1120 ? 576 : 603);
const floorEnd = (x: number) => (x > 780 && x < 1300 ? 913 : 960);

const Pipe = ({ d, c, w, fill }: { d: string; c: string; w: number; fill: string }) => (
  <g fill="none">
    <path d={d} stroke={c} strokeWidth={w} />
    <path d={d} stroke={fill} strokeWidth={w - 2} />
    <path d={d} stroke={c} strokeWidth="1" />
  </g>
);
const Hexes = ({ from, n }: { from: number; n: number }) => (
  <>
    {Array.from({ length: n }, (_, i) => from + i * 34.5).map((x) => (
      <path
        key={x}
        d={`M${x - 6} 570L${x - 12} 580L${x - 6} 590H${x + 6}L${x + 12} 580L${x + 6} 570M${x + 12} 580H${x + 23}M${x - 6} 590L${x - 9} 595M${x + 6} 590L${x + 9} 595`}
      />
    ))}
  </>
);
const Strip = ({ x, w, y }: { x: number; w: number; y: number }) => (
  <>
    <rect x={x} y={y} width={w} height="8" fill="#c3d4e6" />
    <path d={`M${x} ${y + 4}h${w}M${x} ${y + 8}h${w}`} stroke="#222" />
  </>
);
const Node = ({ x, y }: { x: number; y: number }) => (
  <g>
    <rect x={x - 6} y={y - 6} width="12" height="12" fill="#8fb2ea" stroke="#0b44bd" />
    <path d={`M${x - 5} ${y}h10M${x} ${y - 5}v10`} stroke="#0937a4" strokeWidth="2" />
    <circle cx={x} cy={y} r="3" fill="#0937a4" />
  </g>
);

const Drawing = () => (
  <Sheet viewBox="353 180 1081 780" preserveAspectRatio="xMinYMin slice" role="img" aria-label="Grundriss EG" shapeRendering="auto">
    <g stroke="#8f8f8f" shapeRendering="crispEdges">
      {FLOOR.map((x) => <path key={x} d={`M${x} ${floorTop(x)}V${floorEnd(x)}`} />)}
      {[382, 625, 869, 1112, 1355].map((x) => <path key={x} d={`M${x} 771h61`} />)}
      <path d="M503 947h61M747 947h33M929 595h61" />
    </g>
    <g shapeRendering="crispEdges">
      <path d="M764 650V960" stroke="#111" />
      <path d="M473 180V260M666 180V260" stroke="#222" />
      <rect x="793" y="180" width="9" height="381" fill="#c3d4e6" />
      <path d="M793 180V561M797 180V561M802 180V561" stroke="#333" />
    </g>
    <g stroke="#f9a145" fill="none">
      {Array.from({ length: 20 }, (_, i) => 182 + i * 20).map((y) => (
        <path key={y} d={`M802 ${y}H809L814 ${y + 10}H827M814 ${y + 10}L809 ${y + 20}`} />
      ))}
    </g>
    <g shapeRendering="crispEdges">
      <rect x="827" y="180" width="7" height="389" fill="#c3d4e6" />
      <path d="M827 180V569M831 180V565M834 180V561" stroke="#222" />
      <Strip x={353} w={449} y={561} />
      <Strip x={353} w={513} y={594} />
      <Strip x={827} w={39} y={561} />
      <Strip x={1152} w={290} y={561} />
      <Strip x={1152} w={290} y={594} />
      <path d="M353 594H866M1152 594H1442" stroke="#222" />
    </g>
    <g stroke="#f9a145" fill="none">
      <clipPath id="walls"><path d="M353 570H866V594H353ZM1152 570H1442V594H1152Z" /></clipPath>
      <g clipPath="url(#walls)">
        <Hexes from={372} n={3} />
        <Hexes from={821} n={2} />
        <Hexes from={1165} n={9} />
      </g>
    </g>
    <g shapeRendering="crispEdges">
      <path d="M866 561H876V576H881V602H866Z" fill="#ededed" stroke="#222" />
      <rect x="1142" y="561" width="10" height="41" fill="#ededed" stroke="#222" />
      <rect x="876" y="561" width="266" height="15" fill="#cdc0bb" stroke="#111" />
      <path d="M353 561H802M834 561H1434" stroke="#5252b8" />
      <path d="M892 561h18M952 561h18M1014 561h18M1054 561h18M1182 561h18M1242 561h18M1302 561h18M1364 561h18" stroke="#111" />
      <path d="M876 561V295" stroke="#222" />
    </g>

    <path d="M876 295L908 297L951 306" fill="none" stroke="#222" />
    <path d="M1060 368L1085 400L1108 432L1122 462L1134 496L1140 532L1143 575" fill="none" stroke="#222" />
    <path d="M951 180V368H1145V180M1372 180V368H1442" fill="#fff" stroke="#222" shapeRendering="crispEdges" />

    <g stroke="#6a6ad0" strokeDasharray="65 16 24 16" strokeDashoffset="81" shapeRendering="crispEdges">
      <path d="M377 180V960M814 180V913M1251 180V913" />
    </g>

    <Pipe d="M353 639H748" c="#a428d8" w={9} fill="#dcaef0" />
    <Pipe d="M480 606V639" c="#a428d8" w={7} fill="#dcaef0" />
    <path d="M471 635V644M490 635V644M665 635V644M669 635V644M674 635V644" stroke="#a428d8" />
    <Pipe d="M960 368V630Q960 639 969 639H1434" c="#b02ee0" w={7} fill="#dcaef0" />
    <Pipe d="M1379 368V637" c="#b02ee0" w={7} fill="#dcaef0" />
    <path d="M1371 635V643M1387 635V643M957 632H964M963 635V643" stroke="#a428d8" />

    <Pipe d="M353 672H690Q697 672 697 664V632Q697 625 705 625H748" c="#0a74e0" w={9} fill="#a8d4fb" />
    <path d="M353 672H650" stroke="#2a90f5" strokeWidth="4" />
    <Pipe d="M658 606V668" c="#0a74e0" w={7} fill="#a8d4fb" />
    <circle cx="658" cy="621" r="3" fill="#0a74e0" />
    <path d="M653 621H663M653 614H662M653 628H662M650 668V676M688 668V676M693 632H702M705 621V629" stroke="#0a74e0" />
    <Pipe d="M1138 368V671" c="#0a7cec" w={7} fill="#8fc8fa" />
    <Pipe d="M1116 671H1434" c="#0a7cec" w={7} fill="#8fc8fa" />
    <circle cx="1138" cy="621" r="3" fill="#0a74e0" />
    <circle cx="1116" cy="671" r="3" fill="#0a74e0" />
    <path d="M1132 621H1144M1134 614H1142M1134 628H1142M1112 671H1118M1116 665V677M1122 667V675M1129 667V675M1146 667V675M1134 664H1142" stroke="#0a74e0" />

    <rect x="353" y="714" width="1081" height="7" fill="#cc8fb4" />
    <path d="M353 714H1434" stroke="#c01f2c" />
    <path d="M353 721H1434" stroke="#d83a48" />
    <path d="M365 717H482M559 717H1089M1181 717H1283M1374 717H1434" stroke="#e02c40" />
    <path d="M461 717h20M1181 717h5M1374 717h5" stroke="#7a3a90" />
    <Pipe d="M782 639H801Q808 639 808 647V716" c="#e01616" w={7} fill="#f9b0b0" />
    <Pipe d="M782 625H821Q829 625 829 633V716" c="#2323c4" w={7} fill="#a5a5ee" />
    <path d="M794 713V721M798 713V721M808 713H830V721H808ZM813 713V721M817 713V721M821 713V721M839 713V721M804 712H812" stroke="#e01616" fill="none" />
    <circle cx="829" cy="684" r="3" fill="#0c0c90" />
    <path d="M823 684H835M825 678H833M825 691H833M825 713H833" stroke="#2323c4" />
    <path d="M748 639H834M770 625H834" stroke="#6a6ad0" />
    <path d="M764 609V624" stroke="#6a6ad0" />

    <g fontFamily="Liberation Sans, sans-serif" fontSize="10">
      <text x="661" y="649" fill="#777">15.0 mm</text>
      <text x="661" y="664" fill="#777">15.0 mm</text>
      <text x="830" y="649" fill="#333">15.0 mm</text>
      <text x="830" y="664" fill="#333">15.0 mm</text>
    </g>
    <path d="M757 617H771" stroke="#0b44bd" strokeWidth="2" />
    {[679, 754, 764, 775, 848].map((x) => (
      <g key={x}><Node x={x} y={624} /><Node x={x} y={639} /></g>
    ))}
    <g fill="#dde7fa" stroke="#1c50c0">
      <rect x="761" y="645" width="6" height="6" />
      <path d="M764 651V655" />
      <rect x="759" y="655" width="11" height="12" />
      <path d="M759 660H770" />
    </g>

    <g fontFamily="'Roboto Condensed', 'Liberation Sans', sans-serif" fontSize="43" fill="#0a3fc4">
      <rect x="778" y="914" width="520" height="46" fill="#fff" />
      <text x="778" y="955">6-Wege-Ventil mit Regelgruppe</text>
      <rect x="778" y="946" width="92" height="14" fill="#fff" />
      <text x="780" y="985">F</text>
    </g>
  </Sheet>
);

/* ---------- content ---------- */

type Row = { l: string; v?: string; h?: number; dim?: boolean; dots?: boolean; lock?: boolean; tree?: string; pick?: boolean };
const SECTIONS: { t: string; rows: Row[] }[] = [
  { t: "Berechnung - Artikeldaten", rows: [
    { l: "Bezeichnung", v: "6-Wege-Ventil mit Regelgruppe", h: 22 },
    { l: "Hersteller", v: "Frese", dots: true, h: 22 },
    { l: "Artikelnummer" },
    { l: "Kurztext", v: "Frese", dim: true, dots: true },
  ] },
  { t: "Beschreibung", rows: [
    { l: "Kommentare" },
    { l: "Kategorie", v: "HLS-Bauteile", dim: true, h: 18 },
    { l: "MepClass", v: "Thermal.Controller.SixPortVa", lock: true, tree: "treeSoft" },
    { l: "IFC-Klassifizierung", lock: true, tree: "treeSoft" },
    { l: "Kostengruppe", tree: "tree" },
  ] },
  { t: "Heizung - Artikeldaten", rows: [{ l: "Typ" }, { l: "Modellbezeichnung" }] },
  { t: "Heizung - Berechnungsdaten", rows: [{ l: "Druckverlust", v: "28560.5 Pa" }, { l: "Massenstrom" }, { l: "Kv-Wert" }] },
  { t: "Heizung - Geometrie", rows: [{ l: "Nennweite", v: "15", pick: true }] },
  { t: "Kälte - Artikeldaten", rows: [{ l: "Typ" }, { l: "Modellbezeichnung" }] },
  { t: "Kälte - Berechnungsdaten", rows: [{ l: "Druckverlust" }, { l: "Massenstrom" }, { l: "Kv-Wert" }] },
  { t: "Kälte - Geometrie", rows: [] },
];

const SoftLock = styled.span`
  display: flex;
  opacity: 0.5;
`;

const Section = ({ t, rows }: { t: string; rows: Row[] }) => (
  <section>
    <SecHead>{t}<Fold type="button" aria-label={t}><Tri $d="up" /></Fold></SecHead>
    {rows.length > 0 && (
      <Props>
        <colgroup><col width="163" /><col /></colgroup>
        <tbody>
          {rows.map((r) => (
            <Tr key={r.l} $h={r.h ?? 21}>
              <Th scope="row"><Cell>{r.lock && <SoftLock><Icon n="lock" s={10} /></SoftLock>}{r.l}</Cell></Th>
              <Td $tight={!!r.tree || r.h === 18}>
                <Cell>
                  {r.pick ? (
                    <><Select $flush aria-label={r.l}><option>{r.v}</option></Select><Chev $dark /><Space $w={3} /></>
                  ) : (
                    <Value aria-label={`${t} ${r.l}`} defaultValue={r.v} $dim={r.dim} />
                  )}
                  {r.dots && <Dots type="button">...</Dots>}
                  {r.tree && <Icon n={r.tree} s={15} />}
                </Cell>
              </Td>
            </Tr>
          ))}
        </tbody>
      </Props>
    )}
  </section>
);

const QAT: (string | 0 | 1)[] = [
  "props", "open", "save", "sync", 0, "undo", 0, "redo", 0, "print", "pdf", 1, "dimpin", 1, "ruler", 0,
  "dim2", "tag", "letter", 1, "house", 0, "section", "thin", 1, "closeHidden", "switchWin", 0,
];
const TABS = ["Architektur", "Ingenieurbau", "Stahlbau", "Betonfertigteile", "Gebäudetechnik", "Einfügen", "Beschriften", "Berechnung",
  "Körpermodell & Grundstück", "Zusammenarbeit", "Ansicht", "Verwalten", "Zusatzmodule", "LINEAR", "LINEAR | Werkzeuge"];

const Stack = ({ names }: { names: string[] }) => (
  <Col>{names.map((n, i) => <IconBtn key={n + i} aria-label={n}><Icon n={n} /></IconBtn>)}</Col>
);

const OPTIONS = ["Bauteildaten", "Längen", "für alle Bauteile"];
const CheckGroup = () => (
  <Checks>
    {OPTIONS.map((o, i) => <Check key={o}><Tick type="checkbox" defaultChecked={i === 0} />{o}</Check>)}
  </Checks>
);

export default function App() {
  return (
    <Shell>
      <Global />
      <TitleBar>
        <Qat>
          <Icon n="logo" s={18} g={20} />
          <Space $w={0} />
          {QAT.map((q, i) =>
            q === 0 ? <Tri key={i} /> : q === 1 ? <Sep key={i} /> : (
              <Tool key={i} $on={q === "thin"} aria-label={q}><Icon n={q} /></Tool>
            )
          )}
          <More><Tri /></More>
        </Qat>
        <WinTitle>Autodesk Revit 2025 - Office-Bsp-TGA_Main.rvt - Grundriss: EG - OK RFB (Heizung)</WinTitle>
        <WinTools>
          <Tri $d="left" /><Tool aria-label="Suchen"><Icon n="binoc" /></Tool><span>.</span>
          <Space $w={84} />
          <Tri /><Tool aria-label="Store"><Icon n="cart" /></Tool><Sep />
          <Tool aria-label="Hilfe"><Icon n="help" /></Tool><Tri />
          <Space $w={41} />
          <Tool aria-label="Minimieren"><Icon n="min" /></Tool>
          <Tool aria-label="Wiederherstellen"><Icon n="restore" /></Tool>
          <Tool aria-label="Schließen"><Icon n="x" /></Tool>
        </WinTools>
      </TitleBar>
      <TabRow>
        <Tab $kind="file">Datei</Tab>
        {TABS.map((t) => <Tab key={t}>{t}</Tab>)}
        <Tab $kind="green">Ändern | HLS-Bauteile</Tab>
        <Tab $kind="orange">Rohrsysteme</Tab>
        <TabToggle aria-label="Multifunktionsleiste"><span><Tri $d="up" $c="#777" /></span><Tri $c="#777" /></TabToggle>
      </TabRow>

      <Ribbon>
        <Group>
          <Panel $w={77}>
            <PanelBody><BigBtn $on $w={41}><Big n="arrowL" s={32} />Ändern</BigBtn></PanelBody>
            <PanelTitle>Auswählen <Tri /></PanelTitle>
          </Panel>
          <Panel $w={78}>
            <PanelBody>
              <Col $gap={1}>
                <IconBtn aria-label="Typen"><Big n="family" s={32} /></IconBtn>
                <IconBtn $on aria-label="Eigenschaften"><Big n="propsL" /></IconBtn>
              </Col>
            </PanelBody>
            <PanelTitle>Eigenschaften</PanelTitle>
          </Panel>
          <Panel $w={90}>
            <PanelBody $gap={14}>
              <BigBtn><Big n="paste" s={32} />Einfügen<Tri $c="#888" /></BigBtn>
              <Stack names={["cut", "copy", "match"]} />
            </PanelBody>
            <PanelTitle>Zwischenablage</PanelTitle>
          </Panel>
          <Panel $w={163}>
            <PanelBody $gap={7}>
              <Col>
                <RowBtn><Icon n="cope" />Ausklinkung<Tri /></RowBtn>
                <RowBtn><Icon n="cutG" />Schnitt<Tri /></RowBtn>
                <RowBtn><Icon n="join" />Verbinden<Tri /></RowBtn>
              </Col>
              <Stack names={["g1", "g2", "g3"]} />
              <Col>
                <IconBtn aria-label="Fläche"><Icon n="g4" /></IconBtn>
                <SplitBtn><Icon n="g5" /><Tri $c="#888" /></SplitBtn>
                <IconBtn aria-label="Abbruch"><Icon n="g6" /></IconBtn>
              </Col>
            </PanelBody>
            <PanelTitle>Geometrie</PanelTitle>
          </Panel>
          <Panel $w={85}>
            <PanelBody><BigBtn><Big n="activate" s={32} />Aktivieren</BigBtn></PanelBody>
            <PanelTitle>Steuerelemente</PanelTitle>
          </Panel>
          <Panel $w={220}>
            <PanelBody $gap={8}>
              <Col $gap={4}><Big n="align" s={28} /><Big n="move" s={28} /></Col>
              <Col $gap={4}><Big n="offset" s={28} /><Big n="copyL" s={28} /></Col>
              <Col $gap={4}><Big n="mirror" s={28} /><Big n="rotate" s={28} /></Col>
              <Col $gap={4}><Big n="mirror2" s={28} /><Big n="corner" s={28} /></Col>
              <Stack names={["split", "array", "trim1"]} />
              <Stack names={["split", "scale", "trim2"]} />
              <Stack names={["unpin", "pinS", "del"]} />
            </PanelBody>
            <PanelTitle>Ändern</PanelTitle>
          </Panel>
          <Panel $w={59}>
            <PanelBody $gap={8}>
              <Col>
                <SplitBtn><Icon n="bulbSoft" /><Tri $c="#888" /></SplitBtn>
                <SplitBtn><Icon n="brush" /><Tri $c="#888" /></SplitBtn>
                <IconBtn aria-label="Auswahlbox"><Icon n="cubeSoft" /></IconBtn>
              </Col>
              <Stack names={["boxBlue", "lines"]} />
            </PanelBody>
            <PanelTitle>Ansicht</PanelTitle>
          </Panel>
          <Panel $w={51}>
            <PanelBody>
              <Col $gap={6}>
                <SplitBtn><Big n="measure" s={28} /><Tri $c="#888" /></SplitBtn>
                <SplitBtn><Big n="arc" s={28} /><Tri $c="#888" /></SplitBtn>
              </Col>
            </PanelBody>
            <PanelTitle>Messen</PanelTitle>
          </Panel>
          <Panel $w={74}>
            <PanelBody $gap={7}>
              <Col $gap={4}><Big n="cubes" s={29} /><Big n="panelG" s={29} /></Col>
              <Col $gap={4}><Big n="star" s={29} /><Big n="diagram" s={29} /></Col>
            </PanelBody>
            <PanelTitle>Erstellen</PanelTitle>
          </Panel>
        </Group>
        <Group $ctx>
          <Panel $w={62}>
            <PanelBody><BigBtn><Big n="modus" s={32} />{"Familie\nbearbeiten"}</BigBtn></PanelBody>
            <PanelTitle $ctx>Modus</PanelTitle>
          </Panel>
          <Panel $w={62}>
            <PanelBody><BigBtn><Big n="fab" s={32} />{"Entwurf zu\nFertigung"}</BigBtn></PanelBody>
            <PanelTitle $ctx>Fertigung</PanelTitle>
          </Panel>
          <Panel $w={153}>
            <PanelBody $gap={6}>
              <BigBtn><Big n="path" s={32} />Pfad wählen</BigBtn>
              <BigBtn><Big n="branch" s={32} />Abzweig wählen</BigBtn>
            </PanelBody>
            <PanelTitle $ctx>Auswahl</PanelTitle>
          </Panel>
        </Group>
      </Ribbon>
      <OptionBar>Ändern | HLS-Bauteile</OptionBar>

      <Work>
        <Side>
          <SideHead>LINEAR Eigenschaften</SideHead>
          <PickRow>
            <Pick><Select aria-label="Daten"><option>Alle Daten</option></Select><Chev $dark /></Pick>
          </PickRow>
          <PickRow>
            <Pick><Select aria-label="Auswahl"><option>TGA-Komponenten, Sechswegearmatur, ... (1)</option></Select><Chev $dark /></Pick>
            <LockBtn aria-label="Sperren"><Icon n="lock" s={15} /></LockBtn>
          </PickRow>
          <PropScroll>
            <PropList>{SECTIONS.map((s) => <Section key={s.t} {...s} />)}</PropList>
            <Track><Chev $dir={225} /><Thumb /><Fill $grow={40} /><Chev /></Track>
          </PropScroll>
          <Apply>Anwenden</Apply>
          <BottomTabs><BottomTab $on>LINEAR Eigenschaften</BottomTab><BottomTab>Eigenschaften</BottomTab></BottomTabs>
        </Side>

        <Doc>
          <DocTabs>
            <DocTab><Icon n="homeTab" />3D (Kälte)</DocTab>
            <DocTab><Icon n="schema" />Schema(3)</DocTab>
            <DocTab><Icon n="homeTab" />3D (Heizung)</DocTab>
            <DocTab $on><Icon n="plan" />EG - OK RFB (Heizung)<CloseTab><Icon n="x" s={13} /></CloseTab></DocTab>
            <More><Tri $c="#777" /></More>
          </DocTabs>
          <Drawing />
          <VBar><Nub aria-label="Nach oben"><Chev $dir={225} /></Nub><i /><Nub aria-label="Nach unten"><Chev /></Nub></VBar>
          <ViewBar>
            <Scale>1 : 50</Scale>
            <ViewTools>
              {["hatch", "cube", "sun", "shadow", "crop", "crop2", "glasses", "bulb", "boxes", "grid", "dimBulb"].map((n) => <Icon key={n} n={n} />)}
            </ViewTools>
            <Nub aria-label="Nach links"><Chev $dir={135} /></Nub>
            <HTrack><i /></HTrack>
            <Nub aria-label="Nach rechts"><Chev $dir={-45} /></Nub>
          </ViewBar>
          <Grip>.:</Grip>
          <Nav>
            <Dot />
            <NavBtn aria-label="Navigationsrad"><Icon n="wheel" s={20} /><small>2D</small><Tri $c="#999" /></NavBtn>
            <NavRule />
            <NavBtn aria-label="Zoom"><Icon n="zoomR" s={15} /><Tri $c="#999" /></NavBtn>
            <Fill />
            <Dot />
          </Nav>
          <Dialog onSubmit={(e) => e.preventDefault()}>
            <DlgHead><Icon n="dlg" s={14} /><span>Text bearbeiten</span><button type="button" aria-label="Schließen"><Icon n="thinX" s={11} /></button></DlgHead>
            <Note aria-label="Text" spellCheck={false} defaultValue="6-Wege, Ventildimension: DN 15, Gehäusebauform: Sechs-Wege, Gehäuseanschlussart: Außengewinde, Gehäusewerkstoff: Messing" />
            <DlgButtons><DlgBtn $main>OK</DlgBtn><DlgBtn type="button">Abbrechen</DlgBtn></DlgButtons>
          </Dialog>
        </Doc>

        <Side $right>
          <SideHead>LINEAR</SideHead>
          <ModeTabs>
            <Mode aria-label="Menü"><Icon n="burger" s={22} /></Mode>
            <Mode aria-label="Bearbeiten"><Icon n="edit" s={22} /></Mode>
            <Mode aria-label="Bibliothek"><Icon n="books" s={22} /></Mode>
            <Mode $on aria-label="Berechnung"><Icon n="calc" s={22} /></Mode>
            <Mode aria-label="Meldungen"><Icon n="alert" s={20} /><Badge>18</Badge></Mode>
          </ModeTabs>
          <Menu>
            <MenuTitle>Heizung</MenuTitle>
            <Item $h={22}><Icon n="calcS" s={15} />Berechnung ...</Item>
            <Item $h={23}><Icon n="tagHex" s={15} />Beschriftung ...</Item>
            <Item $h={22}><Icon n="legend" s={15} />Visualisierung ...</Item>
            <Item $h={23}><Icon n="out" s={15} />Ausgabe ...</Item>
            <Item $h={25}><Icon n="gear" s={15} />Einstellungen ...</Item>
            <ItemRow><Item $h={20}><Icon n="listBlue" s={15} />Materialdaten</Item><Fold aria-label="Materialdaten"><Tri $d="up" /></Fold></ItemRow>
            <Box $pad={4}>
              {[["pipe", "Rohre und Dämmungen ..."], ["valve", "Armaturen ..."], ["chart", "Datensatzerfassung ..."], ["pump", "Pumpen ..."], ["radiator", "HK-Anschluss ..."], ["listClip", "Zusatzmaterial ..."]].map(([n, t]) => (
                <Item key={t} $h={26} $in><Icon n={n} s={15} />{t}</Item>
              ))}
            </Box>
            <Item $h={23}><Icon n="station" s={15} />Einstellungen Wohnungsstationen ...</Item>
            <Item $h={22}><Icon n="place" s={15} />Verortung ...</Item>
            <ItemRow><Item $h={20}><Icon n="block" s={15} />Bauteile</Item><Fold aria-label="Bauteile"><Tri $d="up" /></Fold></ItemRow>
            <Box $pad={8}>
              <Item $h={26} $in><Icon n="tree" s={15} />Klassifizieren ...</Item>
              <Item $h={26} $in><Icon n="tech" s={15} />Technische Daten ...</Item>
              <Item $h={26} $in><Icon n="valveBlue" s={15} />Anschlüsse ...</Item>
              <Item $h={24} $in><Icon n="copyBlue" s={15} />Kopieren &lt;</Item>
              <CheckGroup />
              <Item $h={21} $in><Icon n="undoBlue" s={15} />Zurücksetzen &lt;</Item>
              <CheckGroup />
              <Item $h={21} $in><Icon n="connect" s={15} />Bauteile verbinden &lt;</Item>
            </Box>
            <Foot>
              <Icon n="b1" /><Icon n="b2" /><Icon n="b3" /><Space $w={0} />
              <Icon n="b4" /><Icon n="b5" /><Space $w={0} /><Icon n="b6" />
              <Fill />
              <Icon n="w1" /><Icon n="w2" /><Icon n="helpDark" />
            </Foot>
          </Menu>
          <BottomTabs><BottomTab $on>LINEAR</BottomTab><BottomTab>Projektbrowser -...</BottomTab><BottomTab>Systembrowser -...</BottomTab></BottomTabs>
        </Side>
      </Work>

      <Status>
        <span>RVT-Verknüpfungen : Verknüpftes Revit-Modell : Office-Bsp-ARC.rvt : 2 : Position &lt;Nicht gemeinsam genutzt&gt;</span>
        <StatusPart>
          <Icon n="sw" /><Space $w={187} /><Chev $dark /><Space $w={12} />
          <Icon n="user" />:0<Space $w={22} /><Icon n="docList" /><Space $w={8} /><Icon n="docOut" /><Space $w={9} />
          Basisvorlage<Space $w={116} /><Chev $dark />
        </StatusPart>
        <StatusPart>
          {["s1", "s2", "s3", "s4", "s5", "s6"].map((n) => <React.Fragment key={n}><Space $w={8} /><Icon n={n} /></React.Fragment>)}
          <Space $w={6} /><Icon n="filter" />:1
        </StatusPart>
      </Status>
    </Shell>
  );
}
